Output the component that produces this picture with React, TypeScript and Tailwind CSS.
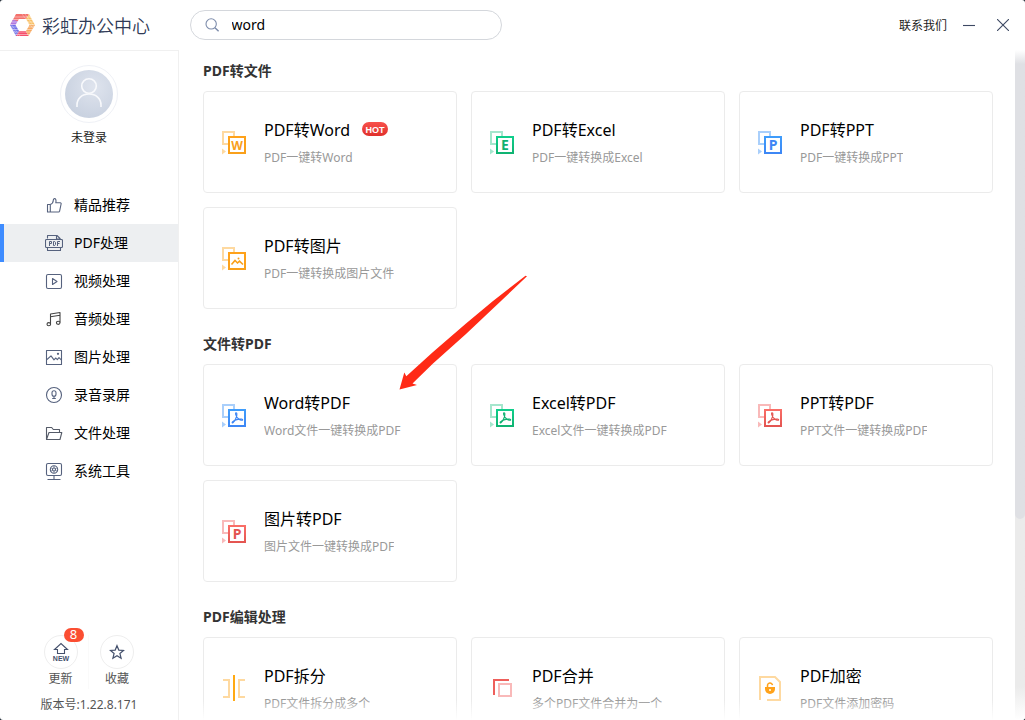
import { useState } from "react";
import type { ReactNode } from "react";

type Tone = "orange" | "green" | "blue" | "red";

type Tool = {
  title: string;
  desc: string;
  icon: ReactNode;
  hot?: boolean;
};

const tones: Record<Tone, { from: string; to: string; light: string }> = {
  orange: { from: "#ffa21a", to: "#f9a01b", light: "#fed9a0" },
  green: { from: "#10cf8c", to: "#0fb271", light: "#a5e6cd" },
  blue: { from: "#3f9dfb", to: "#3d86f5", light: "#a9cffb" },
  red: { from: "#fa6f68", to: "#e35450", light: "#f9b9b9" },
};

function ConvertIcon({ id, tone, children }: { id: string; tone: Tone; children: ReactNode }) {
  const c = tones[tone];
  return (
    <svg width="24" height="26" viewBox="0 0 24 26" className="shrink-0">
      <defs>
        <linearGradient id={id} gradientUnits="userSpaceOnUse" x1="0" y1="7" x2="0" y2="25">
          <stop offset="0" stopColor={c.from} />
          <stop offset="1" stopColor={c.to} />
        </linearGradient>
      </defs>
      <path d="M6 15H1V3h11v4" fill="none" stroke={c.light} strokeWidth="2" />
      <path d="M0 19.5l4 3-4 3z" fill={c.light} />
      <rect x="7" y="8" width="16" height="16" fill="#fff" stroke={`url(#${id})`} strokeWidth="2" />
      {children}
    </svg>
  );
}

function LetterIcon({ id, tone, letter }: { id: string; tone: Tone; letter: string }) {
  return (
    <ConvertIcon id={id} tone={tone}>
      <text
        x="15"
        y="21"
        textAnchor="middle"
        fontSize={letter === "W" ? 12 : 14}
        fontWeight="700"
        fontFamily="Noto Sans, sans-serif"
        fill={tones[tone].to}
      >
        {letter}
      </text>
    </ConvertIcon>
  );
}

function AcrobatIcon({ id, tone }: { id: string; tone: Tone }) {
  return (
    <ConvertIcon id={id} tone={tone}>
      <path
        d="M14 10.8c1.2-.2 1 2.4.4 4.200-.8 2.400-2.200 5-3.400 5.800-.8.3-1.200-.4-.6-1 1.400-1.400 4-2.300 6.600-2.700 1.800-.2 3.800-.1 3.700.7-.2.9-2.200.4-3.600-.6-1.500-1-2.800-2.600-3.300-4.400-.3-1-.4-1.900.2-2z"
        fill="none"
        stroke={tones[tone].to}
        strokeWidth="1.1"
      />
    </ConvertIcon>
  );
}

function PhotoIcon() {
  return (
    <ConvertIcon id="pdf-photo" tone="orange">
      <path d="M9.500 19.500l3.500-4 2.500 2.500 2-1.800 3.500 3.300" fill="none" stroke="#f9a01b" strokeWidth="1.600" />
      <circle cx="16.500" cy="13.500" r="1" fill="#f9a01b" />
    </ConvertIcon>
  );
}

function SplitIcon() {
  return (
    <svg width="24" height="26" viewBox="0 0 24 26" className="shrink-0" fill="none" strokeWidth="2">
      <path d="M1 5h6v17H1M23 5h-6v17h6" stroke="#fed9a0" />
      <path d="M12 0v26" stroke="#ffa912" />
    </svg>
  );
}

function MergeIcon() {
  return (
    <svg width="24" height="26" viewBox="0 0 24 26" className="shrink-0" fill="none" strokeWidth="2">
      <path d="M4 20V5h15" stroke="#ee5f5b" />
      <rect x="9" y="9" width="12" height="12" stroke="#f9b9b9" />
    </svg>
  );
}

function LockIcon() {
  return (
    <svg width="24" height="26" viewBox="0 0 24 26" className="shrink-0" fill="none">
      <path d="M2 25V2h15l5 5v18H9" stroke="#fed9a0" strokeWidth="2" />
      <path d="M9.500 13v-2.200a2.500 2.500 0 0 1 5-.6" stroke="#ffa21a" strokeWidth="1.500" />
      <path d="M7 12h10v2a5 5 0 0 1-10 0z" fill="#ffa21a" />
      <circle cx="12" cy="15" r="1" fill="#fff" />
    </svg>
  );
}

function NavIcon({ children, color = "#56627e" }: { children: ReactNode; color?: string }) {
  return (
    <svg width="18" height="18" viewBox="0 0 18 18" fill="none" stroke={color} strokeWidth="1.100" strokeLinejoin="round">
      {children}
    </svg>
  );
}

const navItems = [
  {
    label: "精品推荐",
    icon: (
      <NavIcon>
        <path d="M2.500 8.500h2.800v7.500H2.500zM5.300 8.500c1.700-.6 2.900-2.200 3-4.300.1-1.200.8-1.700 1.500-1.600 1.100.2 1.500 1.500 1 4.200h4.500c.7 0 1 .6.800 1.200l-1.500 7.200c-.2.5-.5.8-1 .8H5.300" />
      </NavIcon>
    ),
  },
  {
    label: "PDF处理",
    icon: (
      <NavIcon>
        <path d="M2.500 4.500V1.500h9.500l3.500 3.500M11.500 1.500v3.500h4M2.500 13.500v3h13v-3" />
        <rect x=".5" y="5.500" width="17" height="8" rx="1" />
        <path d="M4.500 12V7.500h2v2h-2M8.500 7.500v4h1.200l.8-1v-2l-.8-1zM12.500 12V7.500h2.500M12.500 9.500h2" strokeWidth="1" />
      </NavIcon>
    ),
  },
  {
    label: "视频处理",
    icon: (
      <NavIcon>
        <rect x="1.500" y="2.500" width="15" height="14" rx="1.500" />
        <path d="M7.500 6.500v6l4.500-3z" />
      </NavIcon>
    ),
  },
  {
    label: "音频处理",
    icon: (
      <NavIcon color="#444">
        <path d="M5.500 14V4l9.500-1.500V12.500M5.500 6.700L15 5.200" />
        <ellipse cx="3.800" cy="14.200" rx="1.800" ry="1.600" />
        <ellipse cx="13.200" cy="12.800" rx="1.800" ry="1.600" />
      </NavIcon>
    ),
  },
  {
    label: "图片处理",
    icon: (
      <NavIcon>
        <rect x="1.500" y="2.500" width="15" height="14" />
        <path d="M2 11.500l4-3.700 3 4 1.800-1.800 1.500 1.700 1.700-2 2.500 2.500" />
        <circle cx="13" cy="5.800" r=".6" />
      </NavIcon>
    ),
  },
  {
    label: "录音录屏",
    icon: (
      <NavIcon>
        <circle cx="9" cy="9" r="7.500" />
        <rect x="7" y="4.800" width="4" height="5.500" rx="2" />
        <path d="M9 10.300v2.200M7.200 12.500h3.600" />
      </NavIcon>
    ),
  },
  {
    label: "文件处理",
    icon: (
      <NavIcon color="#555b68">
        <path d="M1.500 15.500V3.500h5.200l1.600 2h6.200v2.500M1.500 15.500L4 8.500h12.800l-1.800 7z" />
      </NavIcon>
    ),
  },
  {
    label: "系统工具",
    icon: (
      <NavIcon>
        <rect x="1.500" y="1.500" width="15" height="12" rx="1.500" />
        <circle cx="9" cy="7.500" r="3.700" />
        <circle cx="9" cy="7.500" r="1.500" />
        <path d="M9 3.800V6M9 9v2.200M5.800 5.700l1.900 1M10.300 8.300l1.900 1M5.800 9.300l1.900-1M10.300 6.700l1.900-1" strokeWidth=".8" />
        <path d="M9 13.500v4M2.500 17.500h13" />
      </NavIcon>
    ),
  },
];

const sections: { title: string; tools: Tool[] }[] = [
  {
    title: "PDF转文件",
    tools: [
      { title: "PDF转Word", desc: "PDF一键转Word", hot: true, icon: <LetterIcon id="pdf-word" tone="orange" letter="W" /> },
      { title: "PDF转Excel", desc: "PDF一键转换成Excel", icon: <LetterIcon id="pdf-excel" tone="green" letter="E" /> },
      { title: "PDF转PPT", desc: "PDF一键转换成PPT", icon: <LetterIcon id="pdf-ppt" tone="blue" letter="P" /> },
      { title: "PDF转图片", desc: "PDF一键转换成图片文件", icon: <PhotoIcon /> },
    ],
  },
  {
    title: "文件转PDF",
    tools: [
      { title: "Word转PDF", desc: "Word文件一键转换成PDF", icon: <AcrobatIcon id="word-pdf" tone="blue" /> },
      { title: "Excel转PDF", desc: "Excel文件一键转换成PDF", icon: <AcrobatIcon id="excel-pdf" tone="green" /> },
      { title: "PPT转PDF", desc: "PPT文件一键转换成PDF", icon: <AcrobatIcon id="ppt-pdf" tone="red" /> },
      { title: "图片转PDF", desc: "图片文件一键转换成PDF", icon: <LetterIcon id="image-pdf" tone="red" letter="P" /> },
    ],
  },
  {
    title: "PDF编辑处理",
    tools: [
      { title: "PDF拆分", desc: "PDF文件拆分成多个", icon: <SplitIcon /> },
      { title: "PDF合并", desc: "多个PDF文件合并为一个", icon: <MergeIcon /> },
      { title: "PDF加密", desc: "PDF文件添加密码", icon: <LockIcon /> },
    ],
  },
];

function Logo() {
  return (
    <svg width="25" height="24" viewBox="0 0 25 24" fill="none">
      <path d="M6 1h13l-3 5.500H9.500L6.500 12H0z" fill="#f4716c" />
      <path d="M0 12h6.500l3 5.500L7 23H6z" fill="#6f6fe8" />
      <path d="M3 6.500L0 12h6.500l2-3.500z" fill="#b07ae0" />
      <path d="M6 23l3.500-5.500h6l3 5.500z" fill="#f4506c" />
      <path d="M18.500 23l-3-5.500 3-5.500H25z" fill="#f7a860" />
      <path d="M19 1l6 11h-6.500l-3-5.500z" fill="#f9bf62" />
      <path
        d="M0 4h25M0 6.500h25M0 9h25M0 11.500h25M0 14h25M0 16.500h25M0 19h25M0 21.500h25"
        stroke="#fff"
        strokeWidth=".7"
        opacity=".65"
      />
      <path d="M2 15l6 8M0 10l10 13M15 1l10 14M18 1l7 10M12 1l13 17" stroke="#fff" strokeWidth=".5" opacity=".6" />
      <path d="M9 6h7l3.500 6-3.500 6H9l-3.500-6z" fill="#fff" />
    </svg>
  );
}

function ToolCard({ tool }: { tool: Tool }) {
  return (
    <button
      type="button"
      className="flex h-[102px] items-center gap-[18px] rounded border border-[#ebebeb] bg-white px-[18px] text-left hover:border-blue-300"
    >
      {tool.icon}
      <span className="flex min-w-0 flex-col gap-[6px] pt-[2px]">
        <span className="flex items-center gap-3 text-base leading-6 text-black">
          {tool.title}
          {tool.hot && (
            <span className="mb-[2px] flex h-[14px] w-[26px] items-center justify-center rounded-full bg-gradient-to-b from-[#f8504b] to-[#e02f2b] pt-px font-['Liberation_Sans',sans-serif] text-[9px] leading-[14px] font-bold text-white">
              HOT
            </span>
          )}
        </span>
        <span className="truncate text-xs leading-5 text-[#999]">{tool.desc}</span>
      </span>
    </button>
  );
}

export default function App() {
  const [keyword, setKeyword] = useState("word");
  const [active, setActive] = useState("PDF处理");

  return (
    <div className="h-screen bg-[#1b2530] font-['Noto_Sans','Noto_Sans_CJK_SC',sans-serif] text-[#333]">
      <div className="flex h-full flex-col overflow-hidden rounded-[3px] bg-white">
        <header className="flex h-[50px] shrink-0 items-center pr-4">
          <div className="flex w-[190px] items-center gap-[7px] pl-[10px]">
            <Logo />
            <h1 className="pt-[2px] text-lg font-[350] text-[#2f3a56]">彩虹办公中心</h1>
          </div>
          <label className="flex h-[30px] w-[312px] items-center gap-3 rounded-full border border-[#d4d7dc] px-[14px]">
            <svg width="16" height="16" viewBox="0 0 16 16" fill="none" stroke="#7d8cab" strokeWidth="1.200">
              <circle cx="6.800" cy="6.800" r="5.700" />
              <path d="M11 11l4 4" strokeWidth="1.600" />
            </svg>
            <input
              type="text"
              aria-label="搜索"
              value={keyword}
              onChange={(e) => setKeyword(e.target.value)}
              className="w-full bg-transparent text-sm text-black outline-none"
            />
          </label>
          <div className="ml-auto flex items-center gap-4">
            <a href="#contact" className="pt-[2px] text-xs text-[#222]">
              联系我们
            </a>
            <button type="button" aria-label="最小化">
              <svg width="12" height="14" viewBox="0 0 12 14" stroke="#3d4963" strokeWidth="1.100">
                <path d="M0 7.500h12" />
              </svg>
            </button>
            <button type="button" aria-label="关闭" className="pl-[6px]">
              <svg width="12" height="12" viewBox="0 0 12 12" stroke="#3d4963" strokeWidth="1.100">
                <path d="M0 0l12 12M12 0L0 12" />
              </svg>
            </button>
          </div>
        </header>

        <div className="flex min-h-0 flex-1">
          <aside className="flex w-[179px] shrink-0 flex-col border-t border-r border-[#f0f0f0]">
            <div className="flex flex-col items-center pt-[14px]">
              <div className="rounded-full border border-[#eff1f6] p-1">
                <svg width="48" height="48" viewBox="0 0 48 48" fill="none">
                  <defs>
                    <radialGradient id="avatar" cx=".6" cy=".35" r=".75">
                      <stop offset="0" stopColor="#dfe4ee" />
                      <stop offset="1" stopColor="#c6cfde" />
                    </radialGradient>
                  </defs>
                  <circle cx="24" cy="24" r="24" fill="url(#avatar)" />
                  <circle cx="24" cy="16" r="7.300" stroke="#f8f9fc" strokeWidth="1.600" />
                  <path d="M12 37v-2c0-6.500 5-11 12-11s12 4.500 12 11v2" stroke="#f8f9fc" strokeWidth="1.600" />
                </svg>
              </div>
              <p className="mt-[5px] text-xs leading-5 text-[#222]">未登录</p>
            </div>

            <nav className="mt-[38px] flex flex-col">
              {navItems.map((item) => (
                <button
                  key={item.label}
                  type="button"
                  onClick={() => setActive(item.label)}
                  className={
                    item.label === active
                      ? "flex h-[38px] items-center gap-[11px] border-l-4 border-[#3e8cff] bg-[#edeff1] pl-[41px] text-sm text-black"
                      : "flex h-[38px] items-center gap-[11px] border-l-4 border-transparent pl-[41px] text-sm text-black"
                  }
                >
                  {item.icon}
                  {item.label}
                </button>
              ))}
            </nav>

            <div className="mt-auto flex flex-col items-center pb-[5px] text-xs text-[#555]">
              <div className="flex">
                <button type="button" className="flex w-14 flex-col items-center border-r border-[#fafafa]">
                  <span className="relative flex size-[34px] items-center justify-center rounded-full border border-[#eee]">
                    <svg width="18" height="20" viewBox="0 0 18 20" fill="none" stroke="#45516d" strokeWidth="1.100">
                      <path d="M5.500 11.500V7.500H2.500L9 1.500l6.500 6h-3v4z" />
                      <text
                        x="9"
                        y="19"
                        textAnchor="middle"
                        fontSize="7"
                        fontWeight="700"
                        fontFamily="Liberation Sans, sans-serif"
                        fill="#45516d"
                        stroke="none"
                      >
                        NEW
                      </text>
                    </svg>
                    <span className="absolute -top-2 left-[19px] flex h-[14px] w-5 items-center justify-center rounded-full bg-[#fb4e32] text-[13px] text-white">
                      8
                    </span>
                  </span>
                  <span className="leading-5">更新</span>
                </button>
                <button type="button" className="flex w-14 flex-col items-center">
                  <span className="flex size-[34px] items-center justify-center rounded-full border border-[#eee]">
                    <svg width="16" height="16" viewBox="0 0 16 16" fill="none" stroke="#45516d" strokeWidth="1.200">
                      <path d="M8 1.700l1.800 4.400 4.700.4-3.600 3 1.200 4.700L8 11.700l-4.100 2.500 1.200-4.700-3.600-3 4.700-.4z" />
                    </svg>
                  </span>
                  <span className="leading-5">收藏</span>
                </button>
              </div>
              <p className="mt-[6px] leading-5">版本号:1.22.8.171</p>
            </div>
          </aside>

          <main className="relative min-w-0 flex-1 overflow-hidden pt-[11px] pr-[22px] pl-6">
            {sections.map((section) => (
              <section key={section.title} className="mb-[25px]">
                <h2 className="mb-[10px] text-sm leading-5 font-bold text-[#333]">{section.title}</h2>
                <div className="grid grid-cols-3 gap-[14px]">
                  {section.tools.map((tool) => (
                    <ToolCard key={tool.title} tool={tool} />
                  ))}
                </div>
              </section>
            ))}

            {/* red pointer over the Word转PDF card */}
            <svg
              width="130"
              height="116"
              viewBox="0 0 130 116"
              className="pointer-events-none absolute top-[225px] left-[220px]"
            >
              <path
                d="M.5 114.500L5.300 97.500l2 3.800L34 77l33-28.500L94 26 126.500.7l1.500.6L94 33.500 67 59 34 88.500 13.500 108.500l4.500 1.500z"
                fill="#ff2a16"
              />
            </svg>

            <div className="pointer-events-none absolute inset-x-0 bottom-0 h-5 bg-gradient-to-b from-white/0 to-white" />
          </main>

          <div className="flex w-[10px] shrink-0 flex-col bg-gradient-to-b from-[#ebebeb] from-95% to-white">
            <div className="h-[70%] rounded-b-full bg-gradient-to-b from-white to-[#dfe0e4] to-[14px]" />
          </div>
        </div>
      </div>
    </div>
  );
}
